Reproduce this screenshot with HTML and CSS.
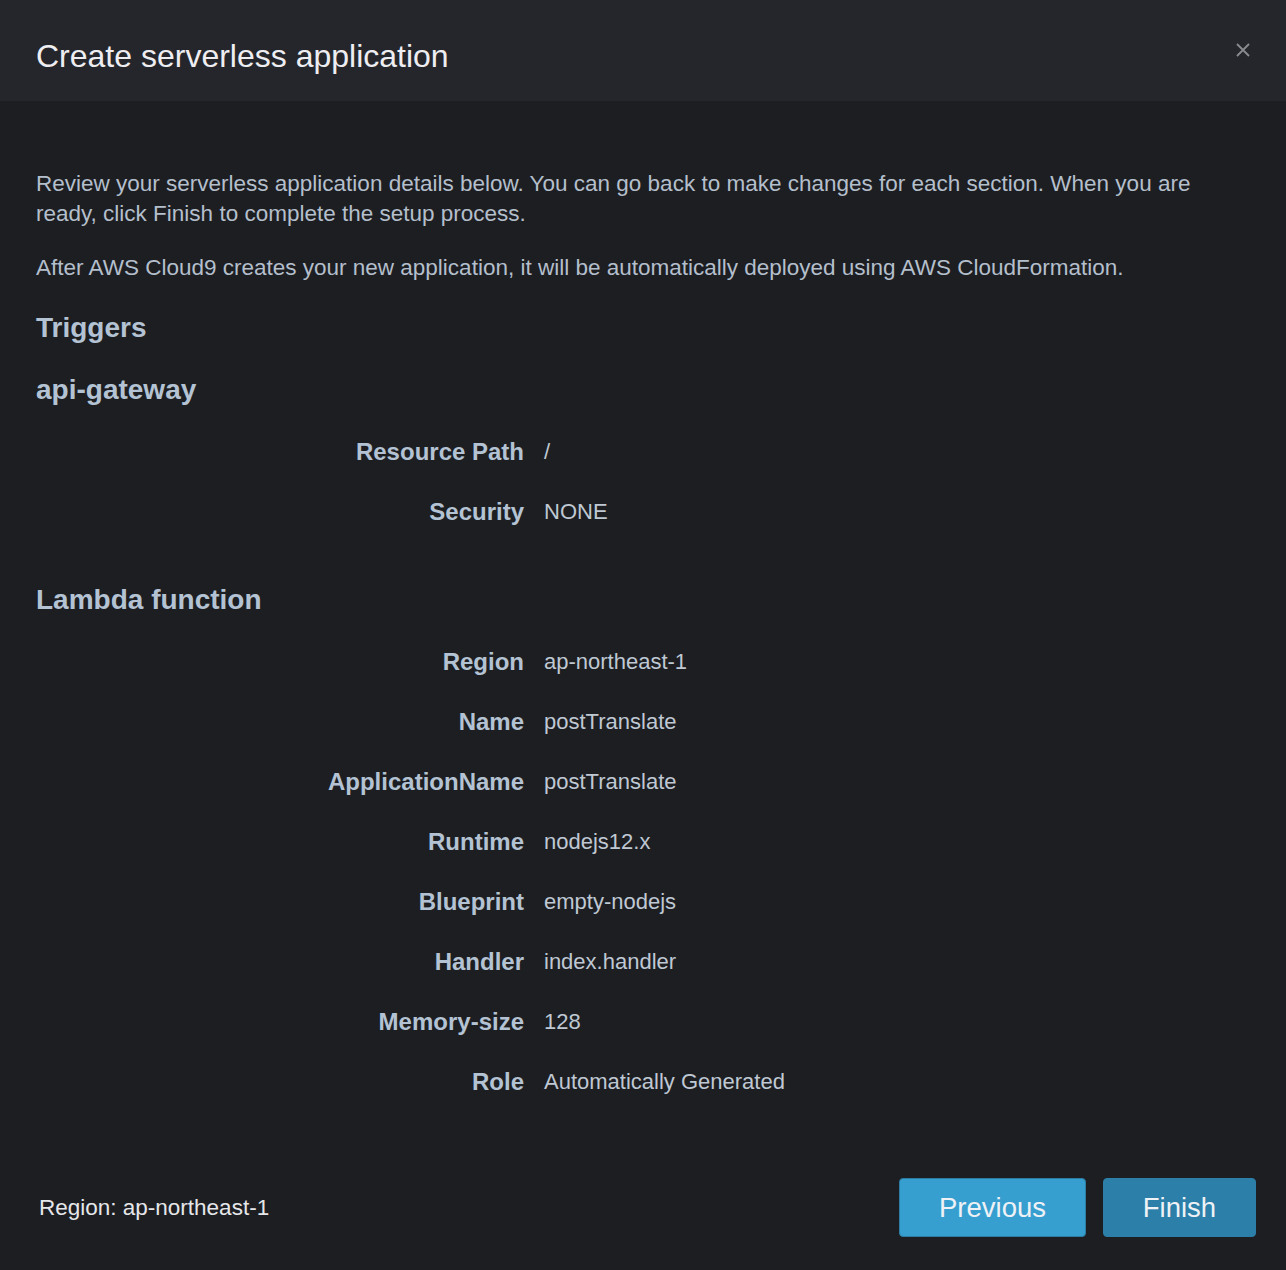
FILE: index.html
```html
<!DOCTYPE html>
<html>
<head>
<meta charset="utf-8">
<link rel="stylesheet" href="styles.css">
</head>
<body>
<div class="dialog">
  <header class="dialog-header">
    <h1 class="dialog-title">Create serverless application</h1>
    <button class="close" aria-label="Close">
      <svg width="16" height="16" viewBox="0 0 16 16"><path d="M2 2 L14 14 M14 2 L2 14" stroke="#8a8b8f" stroke-width="1.8" fill="none"/></svg>
    </button>
  </header>
  <main class="dialog-body">
    <p class="intro">Review your serverless application details below. You can go back to make changes for each section. When you are ready, click Finish to complete the setup process.</p>
    <p class="intro second">After AWS Cloud9 creates your new application, it will be automatically deployed using AWS CloudFormation.</p>
    <h2 class="section-title">Triggers</h2>
    <h3 class="sub-title">api-gateway</h3>
    <dl class="details">
      <dt>Resource Path</dt><dd>/</dd>
      <dt>Security</dt><dd>NONE</dd>
    </dl>
    <h3 class="sub-title lambda">Lambda function</h3>
    <dl class="details">
      <dt>Region</dt><dd>ap-northeast-1</dd>
      <dt>Name</dt><dd>postTranslate</dd>
      <dt>ApplicationName</dt><dd>postTranslate</dd>
      <dt>Runtime</dt><dd>nodejs12.x</dd>
      <dt>Blueprint</dt><dd>empty-nodejs</dd>
      <dt>Handler</dt><dd>index.handler</dd>
      <dt>Memory-size</dt><dd>128</dd>
      <dt>Role</dt><dd>Automatically Generated</dd>
    </dl>
  </main>
  <footer class="dialog-footer">
    <span class="region">Region: ap-northeast-1</span>
    <div class="actions">
      <button class="btn btn-prev">Previous</button>
      <button class="btn btn-finish">Finish</button>
    </div>
  </footer>
</div>
</body>
</html>
```

FILE: styles.css
```css
html, body {
  margin: 0;
  padding: 0;
  background: #1d1e22;
}
body {
  font-family: "Liberation Sans", Arial, sans-serif;
  color: #b9c4d0;
}
.dialog {
  width: 1286px;
  height: 1270px;
  display: flex;
  flex-direction: column;
  background: #1d1e22;
}
.dialog-header {
  height: 101px;
  background: #25262b;
  display: flex;
  align-items: center;
  justify-content: space-between;
  padding: 0 34px 0 36px;
  box-sizing: border-box;
  flex: none;
}
.dialog-title {
  margin: 12px 0 0 0;
  font-size: 32px;
  font-weight: normal;
  color: #eeeef2;
  letter-spacing: 0;
}
.close {
  background: none;
  border: 0;
  padding: 0;
  width: 18px;
  height: 18px;
  display: flex;
  align-items: center;
  justify-content: center;
  margin-bottom: 2px;
}
.dialog-body {
  flex: 1;
  padding: 68px 36px 0 36px;
}
.intro {
  margin: 0;
  max-width: 1200px;
  font-size: 22.5px;
  line-height: 30px;
  color: #b4bfcc;
}
.intro.second {
  margin-top: 24px;
}
.section-title,
.sub-title {
  margin: 28px 0 0 0;
  font-size: 28px;
  line-height: 34px;
  font-weight: bold;
  color: #b4c3d3;
}
.sub-title.lambda {
  margin-top: 56px;
}
.details {
  display: grid;
  grid-template-columns: 488px 1fr;
  column-gap: 20px;
  row-gap: 30px;
  margin: 30px 0 0 0;
  font-size: 22px;
  line-height: 30px;
}
.details dt {
  text-align: right;
  font-size: 24px;
  font-weight: bold;
  color: #b4c3d3;
}
.details dd {
  margin: 0;
  color: #bfc8d3;
}
.dialog-footer {
  flex: none;
  height: 120px;
  display: flex;
  align-items: flex-start;
  justify-content: space-between;
  padding: 28px 30px 0 39px;
  box-sizing: border-box;
}
.region {
  font-size: 22.5px;
  line-height: 59px;
  color: #e6e7ea;
}
.actions {
  display: flex;
  gap: 17px;
}
.btn {
  height: 59px;
  border-radius: 4px;
  font-family: "Liberation Sans", Arial, sans-serif;
  font-size: 27.5px;
  color: #eef2f6;
  cursor: pointer;
}
.btn-prev {
  width: 187px;
  background: #379fd0;
  border: 1px solid #2b7ca3;
}
.btn-finish {
  width: 153px;
  background: #2b7fa8;
  border: 1px solid #2b7fa8;
}
```
